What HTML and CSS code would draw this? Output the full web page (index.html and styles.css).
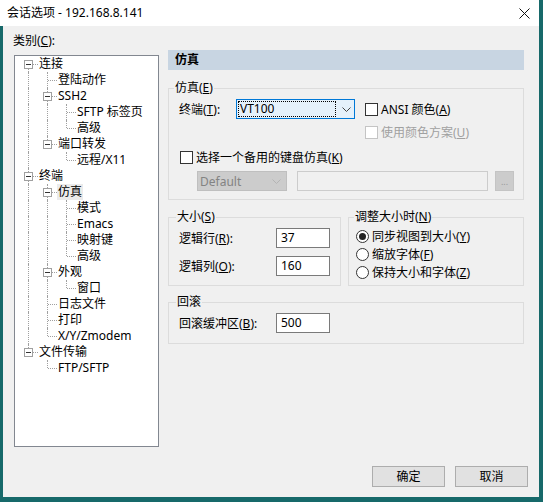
FILE: index.html
```html
<!DOCTYPE html>
<html lang="zh-CN">
<head>
<meta charset="utf-8">
<title>会话选项</title>
<link rel="stylesheet" href="styles.css">
</head>
<body>
<div class="dialog">
  <div class="titlebar">
    <span class="title">会话选项 - 192.168.8.141</span>
    <svg class="close" width="11" height="11" viewBox="0 0 11 11"><path d="M0.5 0.5L10.5 10.5M10.5 0.5L0.5 10.5" stroke="#111" stroke-width="1" fill="none"/></svg>
  </div>
  <div class="content">
    <div class="main">
      <div class="left">
        <div class="cat-label">类别(<u>C</u>):</div>
        <div class="tree">
          <div class="tr"><span class="c f"><i class="box"></i></span><span class="tl">连接</span></div>
          <div class="tr"><span class="c v"></span><span class="c t"></span><span class="tl">登陆动作</span></div>
          <div class="tr"><span class="c v"></span><span class="c t"><i class="box"></i></span><span class="tl">SSH2</span></div>
          <div class="tr"><span class="c v"></span><span class="c v"></span><span class="c t"></span><span class="tl">SFTP 标签页</span></div>
          <div class="tr"><span class="c v"></span><span class="c v"></span><span class="c l"></span><span class="tl">高级</span></div>
          <div class="tr"><span class="c v"></span><span class="c l"><i class="box"></i></span><span class="tl">端口转发</span></div>
          <div class="tr"><span class="c v"></span><span class="c"></span><span class="c l"></span><span class="tl">远程/X11</span></div>
          <div class="tr"><span class="c t"><i class="box"></i></span><span class="tl">终端</span></div>
          <div class="tr"><span class="c v"></span><span class="c t"><i class="box"></i></span><span class="tl sel">仿真</span></div>
          <div class="tr"><span class="c v"></span><span class="c v"></span><span class="c t"></span><span class="tl">模式</span></div>
          <div class="tr"><span class="c v"></span><span class="c v"></span><span class="c t"></span><span class="tl">Emacs</span></div>
          <div class="tr"><span class="c v"></span><span class="c v"></span><span class="c t"></span><span class="tl">映射键</span></div>
          <div class="tr"><span class="c v"></span><span class="c v"></span><span class="c l"></span><span class="tl">高级</span></div>
          <div class="tr"><span class="c v"></span><span class="c t"><i class="box"></i></span><span class="tl">外观</span></div>
          <div class="tr"><span class="c v"></span><span class="c v"></span><span class="c l"></span><span class="tl">窗口</span></div>
          <div class="tr"><span class="c v"></span><span class="c t"></span><span class="tl">日志文件</span></div>
          <div class="tr"><span class="c v"></span><span class="c t"></span><span class="tl">打印</span></div>
          <div class="tr"><span class="c v"></span><span class="c l"></span><span class="tl">X/Y/Zmodem</span></div>
          <div class="tr"><span class="c l"><i class="box"></i></span><span class="tl">文件传输</span></div>
          <div class="tr"><span class="c"></span><span class="c l"></span><span class="tl">FTP/SFTP</span></div>
        </div>
      </div>
      <div class="right">
        <div class="heading">仿真</div>
        <fieldset class="group g-emul">
          <legend>仿真(<u>E</u>)</legend>
          <div class="r1">
            <span class="lbl-term">终端(<u>T</u>):</span>
            <div class="combo">
              <span class="focus">VT100</span>
              <svg class="chev" width="9" height="5" viewBox="0 0 9 5"><path d="M0.5 0.5L4.5 4.5L8.5 0.5" stroke="#444" fill="none"/></svg>
            </div>
            <label class="chk ansi"><span class="cb"></span><span>ANSI 颜色(<u>A</u>)</span></label>
          </div>
          <label class="chk r2"><span class="cb dis"></span><span class="dis-text">使用颜色方案(<u>U</u>)</span></label>
          <label class="chk r3"><span class="cb"></span><span>选择一个备用的键盘仿真(<u>K</u>)</span></label>
          <div class="r4">
            <div class="combo-dis">
              <span class="dtext">Default</span>
              <svg class="chev-dis" width="9" height="5" viewBox="0 0 9 5"><path d="M0.5 0.5L4.5 4.5L8.5 0.5" stroke="#b4b4b4" fill="none"/></svg>
            </div>
            <div class="edit-dis"></div>
            <div class="btn-dis">...</div>
          </div>
        </fieldset>
        <div class="row2">
          <fieldset class="group g-size">
            <legend>大小(<u>S</u>)</legend>
            <div class="frow"><span class="flbl">逻辑行(<u>R</u>):</span><span class="inp">37</span></div>
            <div class="frow second"><span class="flbl">逻辑列(<u>O</u>):</span><span class="inp">160</span></div>
          </fieldset>
          <fieldset class="group g-resize">
            <legend>调整大小时(<u>N</u>)</legend>
            <label class="rad"><span class="rb on"></span><span>同步视图到大小(<u>Y</u>)</span></label>
            <label class="rad"><span class="rb"></span><span>缩放字体(<u>F</u>)</span></label>
            <label class="rad"><span class="rb"></span><span>保持大小和字体(<u>Z</u>)</span></label>
          </fieldset>
        </div>
        <fieldset class="group g-scroll">
          <legend>回滚</legend>
          <div class="frow"><span class="flbl">回滚缓冲区(<u>B</u>):</span><span class="inp">500</span></div>
        </fieldset>
      </div>
    </div>
    <div class="footer">
      <button class="btn">确定</button>
      <button class="btn">取消</button>
    </div>
  </div>
</div>
</body>
</html>
```

FILE: styles.css
```css
html, body {
  margin: 0;
  padding: 0;
}
body {
  width: 543px;
  height: 502px;
  overflow: hidden;
  background: #17696a;
  font-family: "Noto Sans", "Noto Sans CJK SC", sans-serif;
  font-size: 12px;
  color: #000;
}
u { text-decoration: underline; text-underline-offset: 1px; }

.dialog {
  width: 539px;
  height: 497px;
  display: flex;
  flex-direction: column;
}
.titlebar {
  height: 26px;
  flex: none;
  background: #fff;
  display: flex;
  align-items: center;
  padding-left: 7px;
}
.title { line-height: 16px; }
.close { margin-left: auto; margin-right: 9px; }

.content {
  flex: 1;
  margin-left: 3px;
  background: #f0f0f0;
  padding: 7px 0 0 11px;
  display: flex;
  flex-direction: column;
}
.main { display: flex; }
.left { width: 145px; flex: none; }
.cat-label {
  height: 16px;
  line-height: 16px;
  margin-left: -1px;
  margin-bottom: 6px;
}
.tree {
  height: 392px;
  box-sizing: border-box;
  border: 1px solid #828790;
  background: #fff;
}
.tr {
  display: flex;
  height: 16px;
  line-height: 16px;
  padding-left: 4px;
}
.c {
  width: 19px;
  flex: none;
  position: relative;
}
.c.v::before, .c.t::before, .c.l::before, .c.f::before {
  content: "";
  position: absolute;
  left: 9px;
  border-left: 1px dotted #a0a0a0;
}
.c.v::before, .c.t::before { top: 0; bottom: 0; }
.c.l::before { top: 0; height: 8px; }
.c.f::before { top: 8px; bottom: 0; }
.c.t::after, .c.l::after, .c.f::after {
  content: "";
  position: absolute;
  left: 10px;
  top: 8px;
  width: 9px;
  border-top: 1px dotted #a0a0a0;
}
.box {
  position: absolute;
  left: 5px;
  top: 4px;
  width: 9px;
  height: 9px;
  box-sizing: border-box;
  border: 1px solid #a0a0a0;
  background: #fff;
  z-index: 1;
}
.box::after {
  content: "";
  position: absolute;
  left: 1px;
  top: 3px;
  width: 5px;
  height: 1px;
  background: #333;
}
.tl {
  padding: 0 1px;
  white-space: nowrap;
}
.tl.sel { background: #ebebeb; }

.right {
  width: 356px;
  margin-left: 9px;
  padding-top: 17px;
}
.heading {
  height: 20px;
  line-height: 20px;
  background: #c8d5e2;
  font-weight: bold;
  padding-left: 7px;
}

.group {
  margin: 0;
  min-width: 0;
  border: 1px solid #dcdcdc;
  box-sizing: border-box;
}
.group legend {
  line-height: 16px;
  padding: 0 1px;
}
.g-emul {
  margin-top: 10px;
  padding: 3px 9px 8px 10px;
}
.g-emul legend { margin-left: -5px; }
.r1 {
  display: flex;
  align-items: center;
  height: 20px;
}
.lbl-term { width: 57px; flex: none; }
.combo {
  width: 119px;
  height: 20px;
  box-sizing: border-box;
  border: 1px solid #0078d7;
  background: #e5f1fb;
  display: flex;
  align-items: center;
  flex: none;
}
.focus {
  width: 98px;
  height: 16px;
  box-sizing: border-box;
  border: 1px dotted #000;
  margin-left: 1px;
  padding-left: 1px;
  line-height: 14px;
}
.chev { margin-left: auto; margin-right: 3px; }
.chk {
  display: flex;
  align-items: center;
  height: 16px;
  white-space: nowrap;
}
.cb {
  width: 13px;
  height: 13px;
  box-sizing: border-box;
  border: 1px solid #333;
  background: #fff;
  margin-right: 3px;
  flex: none;
}
.cb.dis { border-color: #c4c4c4; }
.dis-text { color: #a0a0a0; }
.ansi { margin-left: 10px; }
.r2 { margin-top: 5px; margin-left: 186px; }
.r3 { margin-top: 9px; margin-left: 1px; }
.r4 {
  margin-top: 6px;
  margin-left: 18px;
  display: flex;
  height: 20px;
}
.combo-dis {
  width: 90px;
  height: 20px;
  box-sizing: border-box;
  border: 1px solid #bfbfbf;
  background: #cccccc;
  display: flex;
  align-items: center;
  color: #838383;
  padding-left: 2px;
}
.chev-dis { margin-left: auto; margin-right: 5px; }
.edit-dis {
  width: 191px;
  height: 20px;
  box-sizing: border-box;
  border: 1px solid #cccccc;
  background: #f0f0f0;
  margin-left: 10px;
}
.btn-dis {
  width: 19px;
  height: 20px;
  box-sizing: border-box;
  border: 1px solid #c4c4c4;
  background: #cccccc;
  margin-left: 7px;
  color: #9a9a9a;
  font-size: 9px;
  line-height: 20px;
  text-align: center;
}

.row2 {
  display: flex;
  gap: 7px;
  margin-top: 9px;
}
.g-size {
  width: 173px;
  padding: 3px 8px 9px 10px;
}
.g-size legend, .g-scroll legend { margin-left: -3px; }
.g-resize {
  width: 176px;
  padding: 2px 6px 4px 7px;
}
.g-resize legend { margin-left: -2px; }
.frow {
  display: flex;
  align-items: center;
  height: 20px;
}
.frow.second { margin-top: 8px; }
.flbl { width: 97px; flex: none; white-space: nowrap; }
.inp {
  width: 54px;
  height: 20px;
  box-sizing: border-box;
  border: 1px solid #7a7a7a;
  background: #fff;
  padding-left: 4px;
  line-height: 18px;
}
.rad {
  display: flex;
  align-items: center;
  height: 18px;
  white-space: nowrap;
}
.rb {
  width: 13px;
  height: 13px;
  box-sizing: border-box;
  border: 1px solid #333;
  border-radius: 50%;
  background: #fff;
  margin-right: 3px;
  flex: none;
  display: flex;
  align-items: center;
  justify-content: center;
}
.rb.on::after {
  content: "";
  width: 7px;
  height: 7px;
  border-radius: 50%;
  background: #222;
}
.g-scroll {
  margin-top: 8px;
  padding: 3px 8px 10px 10px;
}

.footer {
  display: flex;
  justify-content: flex-end;
  gap: 10px;
  margin-top: 19px;
  padding-right: 11px;
}
.btn {
  width: 73px;
  height: 21px;
  box-sizing: border-box;
  border: 1px solid #adadad;
  background: #e1e1e1;
  font-family: inherit;
  font-size: 12px;
  color: #000;
  padding: 0;
  line-height: 19px;
}
```
